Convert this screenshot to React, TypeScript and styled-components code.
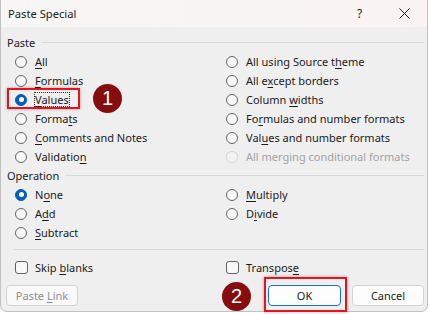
import React from "react";
import styled, { createGlobalStyle } from "styled-components";

const GlobalStyle = createGlobalStyle`
  body {
    margin: 0;
    background: #ffffff;
    font-family: "Noto Sans", "Liberation Sans", sans-serif;
    color: #1b1b1b;
  }
`;

const Stage = styled.div`
  position: relative;
  width: 430px;
  height: 314px;
  overflow: hidden;
`;

const Dialog = styled.div`
  width: 428px;
  height: 312px;
  box-sizing: border-box;
  background: #efefef;
  border: 1px solid #c2c2c2;
  border-top: none;
  border-radius: 0 0 7px 7px;
  overflow: hidden;
  display: flex;
  flex-direction: column;
`;

const TitleBar = styled.div`
  height: 27px;
  flex: none;
  display: flex;
  align-items: center;
  padding-left: 7px;
  background: linear-gradient(90deg, #f8f6f6, #faf3f3);
  font-size: 11.2px;
`;

const Title = styled.span`
  flex: 1;
`;

const TitleButton = styled.span`
  width: 45px;
  display: flex;
  justify-content: center;
  align-items: center;
  font-size: 12px;
`;

const Body = styled.div`
  padding: 6px 3px 0 6px;
  font-size: 11px;
`;

const SectionHeader = styled.div`
  height: 19px;
  display: flex;
  align-items: center;
  gap: 6px;
`;

const Rule = styled.div`
  flex: 1;
  height: 1px;
  background: #d9d9d9;
`;

const OptionsGrid = styled.div<{ $rows: number }>`
  display: grid;
  grid-template-columns: 211px 1fr;
  grid-template-rows: repeat(${p => p.$rows}, 19px);
  grid-auto-flow: column;
  padding-left: 8px;
`;

const Option = styled.div<{ $disabled?: boolean }>`
  display: flex;
  align-items: center;
  gap: 8px;
  white-space: nowrap;
  color: ${p => (p.$disabled ? "#a3a3a3" : "#1b1b1b")};
`;

const Radio = styled.span<{ $checked?: boolean; $disabled?: boolean }>`
  width: 12px;
  height: 12px;
  flex: none;
  box-sizing: border-box;
  border-radius: 50%;
  display: flex;
  align-items: center;
  justify-content: center;
  border: 1px solid ${p => (p.$checked ? "#005fb8" : p.$disabled ? "#d3d3d3" : "#646464")};
  background: ${p => (p.$checked ? "#005fb8" : p.$disabled ? "#f3f3f3" : "#f8f8f8")};
  &::after {
    content: "";
    display: ${p => (p.$checked ? "block" : "none")};
    width: 5px;
    height: 5px;
    border-radius: 50%;
    background: #ffffff;
  }
`;

const Focus = styled.span`
  outline: 1px dotted #333;
  outline-offset: 0px;
  line-height: 13px;
`;

const Key = styled.u`
  text-underline-offset: 2px;
`;

const Divider = styled.div`
  height: 1px;
  background: #d9d9d9;
  margin: 7px 0 0 7px;
`;

const CheckRow = styled.div`
  height: 19px;
  margin-top: 8px;
  display: grid;
  grid-template-columns: 211px 1fr;
  padding-left: 8px;
`;

const Check = styled.span`
  width: 13px;
  height: 13px;
  flex: none;
  box-sizing: border-box;
  border: 1px solid #646464;
  border-radius: 3px;
  background: #f8f8f8;
`;

const CheckLabel = styled.div`
  display: flex;
  align-items: center;
  gap: 7px;
`;

const ButtonRow = styled.div`
  margin: 8px 0 0 -1px;
  display: flex;
  gap: 11px;
`;

const Button = styled.button<{ $primary?: boolean; $disabled?: boolean }>`
  width: ${p => (p.$primary ? 73 : 72)}px;
  height: 21px;
  padding: 0;
  box-sizing: border-box;
  font-family: inherit;
  font-size: 11px;
  border-radius: 4px;
  border: 1px solid ${p => (p.$primary ? "#1a6fc0" : "#d2d2d2")};
  background: ${p => (p.$disabled ? "#f9f9f9" : "#fdfdfd")};
  color: ${p => (p.$disabled ? "#8f8f8f" : "#1b1b1b")};
  &:first-child {
    margin-right: auto;
  }
`;

const Highlight = styled.div<{ $left: number; $top: number; $w: number; $h: number }>`
  position: absolute;
  left: ${p => p.$left}px;
  top: ${p => p.$top}px;
  width: ${p => p.$w}px;
  height: ${p => p.$h}px;
  box-sizing: border-box;
  border: 2px solid #e8121c;
  box-shadow: 0 0 3px rgba(0, 0, 0, 0.35);
`;

const Marker = styled.div<{ $left: number; $top: number }>`
  position: absolute;
  left: ${p => p.$left}px;
  top: ${p => p.$top}px;
  width: 29px;
  height: 29px;
  border-radius: 50%;
  background: #850d0d;
  color: #ffffff;
  font-family: "Liberation Sans", sans-serif;
  font-size: 20px;
  display: flex;
  align-items: center;
  justify-content: center;
`;

type Opt = { text: string; key: number; checked?: boolean; disabled?: boolean; focus?: boolean };

const pasteOptions: Opt[] = [
  { text: "All", key: 0 },
  { text: "Formulas", key: 0 },
  { text: "Values", key: 0, checked: true, focus: true },
  { text: "Formats", key: 5 },
  { text: "Comments and Notes", key: 0 },
  { text: "Validation", key: 9 },
  { text: "All using Source theme", key: 18 },
  { text: "All except borders", key: 5 },
  { text: "Column widths", key: 7 },
  { text: "Formulas and number formats", key: 2 },
  { text: "Values and number formats", key: 3 },
  { text: "All merging conditional formats", key: -1, disabled: true },
];

const operationOptions: Opt[] = [
  { text: "None", key: 1, checked: true },
  { text: "Add", key: 1 },
  { text: "Subtract", key: 0 },
  { text: "Multiply", key: 0 },
  { text: "Divide", key: 1 },
];

const Mnemonic: React.FC<{ text: string; at: number }> = ({ text, at }) =>
  at < 0 ? (
    <>{text}</>
  ) : (
    <>
      {text.slice(0, at)}
      <Key>{text[at]}</Key>
      {text.slice(at + 1)}
    </>
  );

const OptionItem: React.FC<{ opt: Opt }> = ({ opt }) => {
  const label = <Mnemonic text={opt.text} at={opt.key} />;
  return (
    <Option $disabled={opt.disabled}>
      <Radio $checked={opt.checked} $disabled={opt.disabled} />
      {opt.focus ? <Focus>{label}</Focus> : <span>{label}</span>}
    </Option>
  );
};

const CloseIcon = () => (
  <svg width="11" height="11" viewBox="0 0 11 11">
    <path d="M0.5 0.5 L10.5 10.5 M10.5 0.5 L0.5 10.5" stroke="#1b1b1b" strokeWidth="1" />
  </svg>
);

export default function App() {
  return (
    <Stage>
      <GlobalStyle />
      <Dialog>
        <TitleBar>
          <Title>Paste Special</Title>
          <TitleButton>?</TitleButton>
          <TitleButton>
            <CloseIcon />
          </TitleButton>
        </TitleBar>
        <Body>
          <SectionHeader>
            <span>Paste</span>
            <Rule />
          </SectionHeader>
          <OptionsGrid $rows={6}>
            {pasteOptions.map(o => (
              <OptionItem key={o.text} opt={o} />
            ))}
          </OptionsGrid>
          <SectionHeader>
            <span>Operation</span>
            <Rule />
          </SectionHeader>
          <OptionsGrid $rows={3}>
            {operationOptions.map(o => (
              <OptionItem key={o.text} opt={o} />
            ))}
          </OptionsGrid>
          <Divider />
          <CheckRow>
            <CheckLabel>
              <Check />
              <span>
                <Mnemonic text="Skip blanks" at={5} />
              </span>
            </CheckLabel>
            <CheckLabel>
              <Check />
              <span>
                <Mnemonic text="Transpose" at={8} />
              </span>
            </CheckLabel>
          </CheckRow>
          <ButtonRow>
            <Button $disabled>
              <Mnemonic text="Paste Link" at={6} />
            </Button>
            <Button $primary>OK</Button>
            <Button>Cancel</Button>
          </ButtonRow>
        </Body>
      </Dialog>
      <Highlight $left={7} $top={88} $w={73} $h={21} />
      <Highlight $left={264} $top={277} $w={83} $h={35} />
      <Marker $left={93} $top={84}>1</Marker>
      <Marker $left={222} $top={282}>2</Marker>
    </Stage>
  );
}
